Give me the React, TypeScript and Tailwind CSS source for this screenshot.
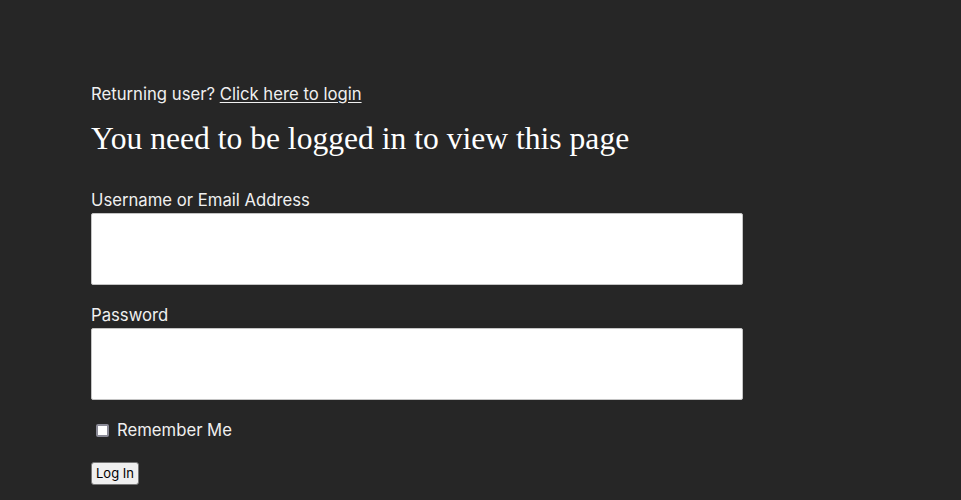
import React from 'react'

export default function App() {
  return (
    <div className="min-h-[500px] w-full bg-[#262626] text-[#f0f0f0]" style={{ fontFamily: 'Inter, sans-serif' }}>
      <div className="pl-[91px] pt-[82px] w-[743px]">
        <p className="text-[16.7px] leading-[24px]">
          Returning user? <a href="#" className="underline underline-offset-2">Click here to login</a>
        </p>
        <h1
          className="mt-[13px] text-[31.6px] leading-[40px] text-white"
          style={{ fontFamily: '"Liberation Serif", serif' }}
        >
          You need to be logged in to view this page
        </h1>
        <form className="mt-[29px]">
          <label className="block text-[16.7px] leading-[24px]">Username or Email Address</label>
          <input
            type="text"
            className="mt-[1px] block h-[72px] w-[652px] rounded-[2px] border border-[#c4c4c4] bg-white"
          />
          <label className="mt-[18px] block text-[16.7px] leading-[24px]">Password</label>
          <input
            type="password"
            className="mt-[1px] block h-[72px] w-[652px] rounded-[2px] border border-[#c4c4c4] bg-white"
          />
          <div className="mt-[18px] flex items-center gap-[8px]">
            <span className="ml-[5px] block h-[13px] w-[13px] rounded-[2px] border-2 border-[#8a8a96] bg-white" />
            <span className="text-[16.7px] leading-[24px]">Remember Me</span>
          </div>
          <button
            type="button"
            className="mt-[20px] block h-[23px] rounded-[3px] border border-[#767676] bg-[#efefef] px-[4px] text-[13px] leading-[19px] text-black"
          >
            Log In
          </button>
        </form>
      </div>
    </div>
  )
}
